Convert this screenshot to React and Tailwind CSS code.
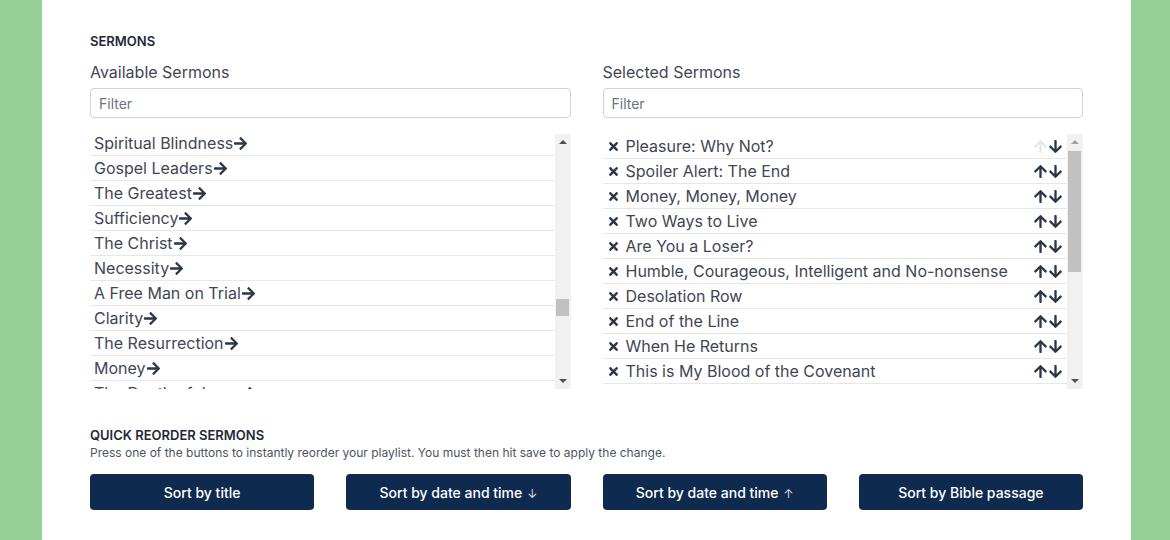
import { useLayoutEffect, useRef } from 'react';
import { FaArrowRight, FaArrowUp, FaArrowDown, FaTimes } from 'react-icons/fa';

// Sermon playlist editor: pick from available sermons, reorder selected ones

const FILLER = [
  'The King Has Come', 'Faith and Doubt', 'Living Water', 'The Good Shepherd', 'Light of the World',
  'A New Heart', 'Grace Alone', 'The Prodigal', 'Bread of Life', 'True Vine',
  'Hope Restored', 'The Narrow Gate', 'Salt and Light', 'Born Again', 'The Sower',
];

const VISIBLE = [
  'Spiritual Blindness', 'Gospel Leaders', 'The Greatest', 'Sufficiency', 'The Christ',
  'Necessity', 'A Free Man on Trial', 'Clarity', 'The Resurrection', 'Money', 'The Death of Jesus',
];

const FIRST_VISIBLE = 89;
const TOTAL = 134;

const AVAILABLE = Array.from({ length: TOTAL }, (_, i) => {
  const v = i - FIRST_VISIBLE;
  if (v >= 0 && v < VISIBLE.length) return VISIBLE[v];
  return FILLER[i % FILLER.length];
});

const SELECTED = [
  'Pleasure: Why Not?', 'Spoiler Alert: The End', 'Money, Money, Money', 'Two Ways to Live',
  'Are You a Loser?', 'Humble, Courageous, Intelligent and No-nonsense', 'Desolation Row',
  'End of the Line', 'When He Returns', 'This is My Blood of the Covenant', 'The Lord Is My Shepherd',
  'Love Your Enemies', 'The Great Banquet', 'Who Is My Neighbour?', 'The Lost Sheep',
  'Ask, Seek, Knock', 'The Rich Fool', 'A Mustard Seed', 'The Last Supper',
];

const BUTTONS = [
  ['Sort by title', ''],
  ['Sort by date and time', '↓'],
  ['Sort by date and time', '↑'],
  ['Sort by Bible passage', ''],
];

const FilterInput = () => (
  <input
    type="text"
    placeholder="Filter"
    className="w-full h-[30px] px-2 text-[14px] text-[#374151] placeholder:text-[#6b7280] border border-[#ced4da] rounded-[4px] outline-none"
  />
);

// classic scrollbar look: track, arrow buttons and thumb
const ScrollTrack = ({ thumbTop, thumbHeight, upDisabled }) => (
  <div className="w-4 shrink-0 bg-[#f1f1f1] flex flex-col">
    <div className="h-4 flex items-center justify-center">
      <div className={`w-0 h-0 border-x-[4px] border-x-transparent border-b-[4px] ${upDisabled ? 'border-b-[#a3a3a3]' : 'border-b-[#505050]'}`} />
    </div>
    <div className="flex-1 relative">
      <div className="absolute left-[1px] right-[2px] bg-[#c1c1c1]" style={{ top: thumbTop, height: thumbHeight }} />
    </div>
    <div className="h-4 flex items-center justify-center">
      <div className="w-0 h-0 border-x-[4px] border-x-transparent border-t-[4px] border-t-[#505050]" />
    </div>
  </div>
);

export default function App() {
  const leftRef = useRef(null);

  useLayoutEffect(() => {
    if (leftRef.current) leftRef.current.scrollTop = FIRST_VISIBLE * 25 + 3;
  }, []);

  return (
    <div className="min-h-screen bg-[#94d098] pl-[42px]" style={{ fontFamily: 'Inter, "Noto Sans", sans-serif' }}>
      <div className="w-[1089px] min-h-screen bg-white px-12 pt-[33px] text-[#374151]">
        <h2 className="text-[13px] font-semibold text-[#1f2937] leading-4">SERMONS</h2>

        <div className="grid grid-cols-2 gap-8 mt-[11px]">
          <div>
            <p className="text-[16px] leading-6 text-[#3f4654] mb-1">Available Sermons</p>
            <FilterInput />
            <div className="mt-4 h-[255px] flex">
              <div ref={leftRef} className="flex-1 overflow-hidden">
                {AVAILABLE.map((title, i) => (
                  <div key={i} className="h-[25px] border-b border-[#e5e7eb] pl-1 flex items-center text-[16px] text-[#3f4654]">
                    {title}
                    <FaArrowRight className="text-[#2d3748]" size={15} />
                  </div>
                ))}
              </div>
              <ScrollTrack thumbTop={149} thumbHeight={17} />
            </div>
          </div>

          <div>
            <p className="text-[16px] leading-6 text-[#3f4654] mb-1">Selected Sermons</p>
            <FilterInput />
            <div className="mt-4 h-[255px] flex">
              <div className="flex-1 overflow-hidden">
                {SELECTED.map((title, i) => (
                  <div key={i} className="h-[25px] border-b border-[#e5e7eb] px-1 flex items-center text-[16px] text-[#3f4654]">
                    <FaTimes className="text-[#2d3748] shrink-0" size={13} />
                    <span className="ml-[6px] flex-1">{title}</span>
                    <FaArrowUp className={i === 0 ? 'text-[#e5e7eb]' : 'text-[#2d3748]'} size={15} />
                    <FaArrowDown className="text-[#2d3748]" size={15} />
                  </div>
                ))}
              </div>
              <ScrollTrack thumbTop={1} thumbHeight={121} upDisabled />
            </div>
          </div>
        </div>

        <h2 className="mt-[38px] text-[13px] font-semibold text-[#1f2937] leading-4">QUICK REORDER SERMONS</h2>
        <p className="text-[12px] text-[#4b5563] leading-4 mt-[2px]">
          Press one of the buttons to instantly reorder your playlist. You must then hit save to apply the change.
        </p>

        <div className="grid grid-cols-4 gap-8 mt-[13px]">
          {BUTTONS.map(([label, arrow]) => (
            <button key={label + arrow} className="h-9 rounded-[4px] bg-[#0f2a4f] text-white text-[14px] font-medium">
              {label}
              {arrow && <span className="ml-[5px] text-[12px] font-light">{arrow}</span>}
            </button>
          ))}
        </div>
      </div>
    </div>
  );
}
